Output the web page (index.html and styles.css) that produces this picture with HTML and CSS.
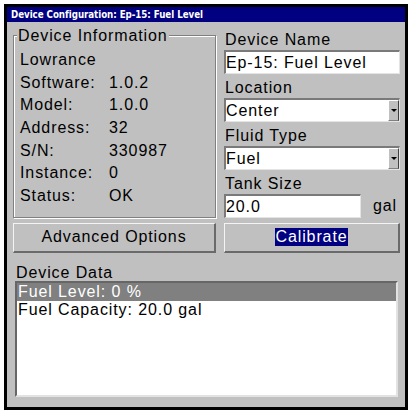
FILE: index.html
```html
<!DOCTYPE html>
<html lang="en">
<head>
    <meta charset="UTF-8">
    <meta name="viewport" content="width=device-width, initial-scale=1.0">
    <title>Device Configuration</title>
    <link rel="stylesheet" href="styles.css">
</head>
<body>

<div class="window">
    <div class="titlebar">Device Configuration: Ep-15: Fuel Level</div>

    <div class="content">
        <div class="top">
            <div class="group">
                <div class="group-title">Device Information</div>
                <div class="info">
                    <div class="full">Lowrance</div>
                    <div>Software:</div><div>1.0.2</div>
                    <div>Model:</div><div>1.0.0</div>
                    <div>Address:</div><div>32</div>
                    <div>S/N:</div><div>330987</div>
                    <div>Instance:</div><div>0</div>
                    <div>Status:</div><div>OK</div>
                </div>
            </div>

            <div class="fields">
                <div class="field">
                    <div class="label">Device Name</div>
                    <div class="box">Ep-15: Fuel Level</div>
                </div>
                <div class="field">
                    <div class="label">Location</div>
                    <div class="box select">
                        <span class="value">Center</span>
                        <span class="drop"><span class="arrow"></span></span>
                    </div>
                </div>
                <div class="field">
                    <div class="label">Fluid Type</div>
                    <div class="box select">
                        <span class="value">Fuel</span>
                        <span class="drop"><span class="arrow"></span></span>
                    </div>
                </div>
                <div class="field">
                    <div class="label">Tank Size</div>
                    <div class="tank">
                        <div class="box tank-box">20.0</div>
                        <span class="unit">gal</span>
                    </div>
                </div>
            </div>
        </div>

        <div class="buttons">
            <div class="btn">Advanced Options</div>
            <div class="btn"><span class="focus">Calibrate</span></div>
        </div>

        <div class="data-label">Device Data</div>
        <div class="list">
            <div class="item selected">Fuel Level: 0 %</div>
            <div class="item">Fuel Capacity: 20.0 gal</div>
        </div>
    </div>
</div>

</body>
</html>
```

FILE: styles.css
```css
body {
    margin: 0;
    background-color: #ffffff;
    font-family: "Liberation Sans", Arial, sans-serif;
    font-size: 16px;
    letter-spacing: 0.9px;
    color: #000;
}
.window {
    margin: 4px;
    width: 404px;
    height: 406px;
    box-sizing: border-box;
    border: 3px solid #000;
    background-color: #c0c0c0;
}
.titlebar {
    height: 15px;
    line-height: 15px;
    padding-left: 4px;
    background-color: #000080;
    color: #fff;
    font-family: "Liberation Sans Narrow", "DejaVu Sans Condensed", sans-serif;
    font-weight: bold;
    font-size: 9.7px;
    letter-spacing: -0.05px;
    white-space: nowrap;
    overflow: hidden;
}
.content {
    padding: 5px 5px 0 6px;
}
.top {
    display: grid;
    grid-template-columns: 203px 176px;
    column-gap: 8px;
}
.group {
    margin-top: 8px;
    border: 1px solid #808080;
    box-shadow: inset 1px 1px #fff, 1px 1px #fff;
    padding: 0 0 8px 6px;
}
.group-title {
    margin: -9px 0 0 -3px;
    width: fit-content;
    padding: 0 1px;
    line-height: 18px;
    background-color: #c0c0c0;
}
.info {
    margin-top: 4px;
    display: grid;
    grid-template-columns: 89px 1fr;
    grid-auto-rows: 22.7px;
    line-height: 22.7px;
}
.info .full {
    grid-column: 1 / 3;
}
.fields {
    padding-top: 2.5px;
}
.field {
    margin-bottom: 4px;
}
.field:last-child {
    margin-bottom: 0;
}
.label {
    line-height: 20px;
    padding-left: 1px;
}
.box {
    height: 24px;
    box-sizing: border-box;
    border-style: solid;
    border-width: 2px 1px 1px 2px;
    border-color: #7a7a7a #e4e4e4 #e4e4e4 #7a7a7a;
    background-color: #fff;
    line-height: 21px;
    white-space: nowrap;
}
.select {
    display: flex;
}
.select .value {
    flex: 1;
}
.drop {
    width: 11px;
    box-sizing: border-box;
    border-style: solid;
    border-width: 1px;
    border-color: #fff #404040 #808080 #fff;
    background-color: #c0c0c0;
    display: flex;
    align-items: center;
    justify-content: center;
}
.arrow {
    width: 0;
    height: 0;
    border-left: 3px solid transparent;
    border-right: 3px solid transparent;
    border-top: 3px solid #000;
}
.tank {
    display: flex;
    align-items: center;
}
.tank-box {
    width: 137px;
}
.unit {
    margin-left: 12px;
}
.buttons {
    margin-top: 5px;
    display: grid;
    grid-template-columns: 203px 176px;
    column-gap: 8px;
}
.btn {
    height: 30px;
    box-sizing: border-box;
    border-style: solid;
    border-width: 1px 2px 2px 1px;
    border-color: #f4f4f4 #6a6a6a #6a6a6a #f4f4f4;
    display: flex;
    align-items: center;
    justify-content: center;
    line-height: 18px;
}
.focus {
    background-color: #000080;
    color: #fff;
}
.data-label {
    margin-top: 11px;
    line-height: 17px;
    padding-left: 3px;
}
.list {
    margin: 0 2px;
    height: 116px;
    box-sizing: border-box;
    border-style: solid;
    border-width: 2px;
    border-color: #666 #e2e2e2 #e2e2e2 #666;
    background-color: #fff;
}
.item {
    line-height: 18.5px;
    padding-left: 1px;
    white-space: nowrap;
}
.selected {
    background-color: #808080;
    color: #fff;
}
```
